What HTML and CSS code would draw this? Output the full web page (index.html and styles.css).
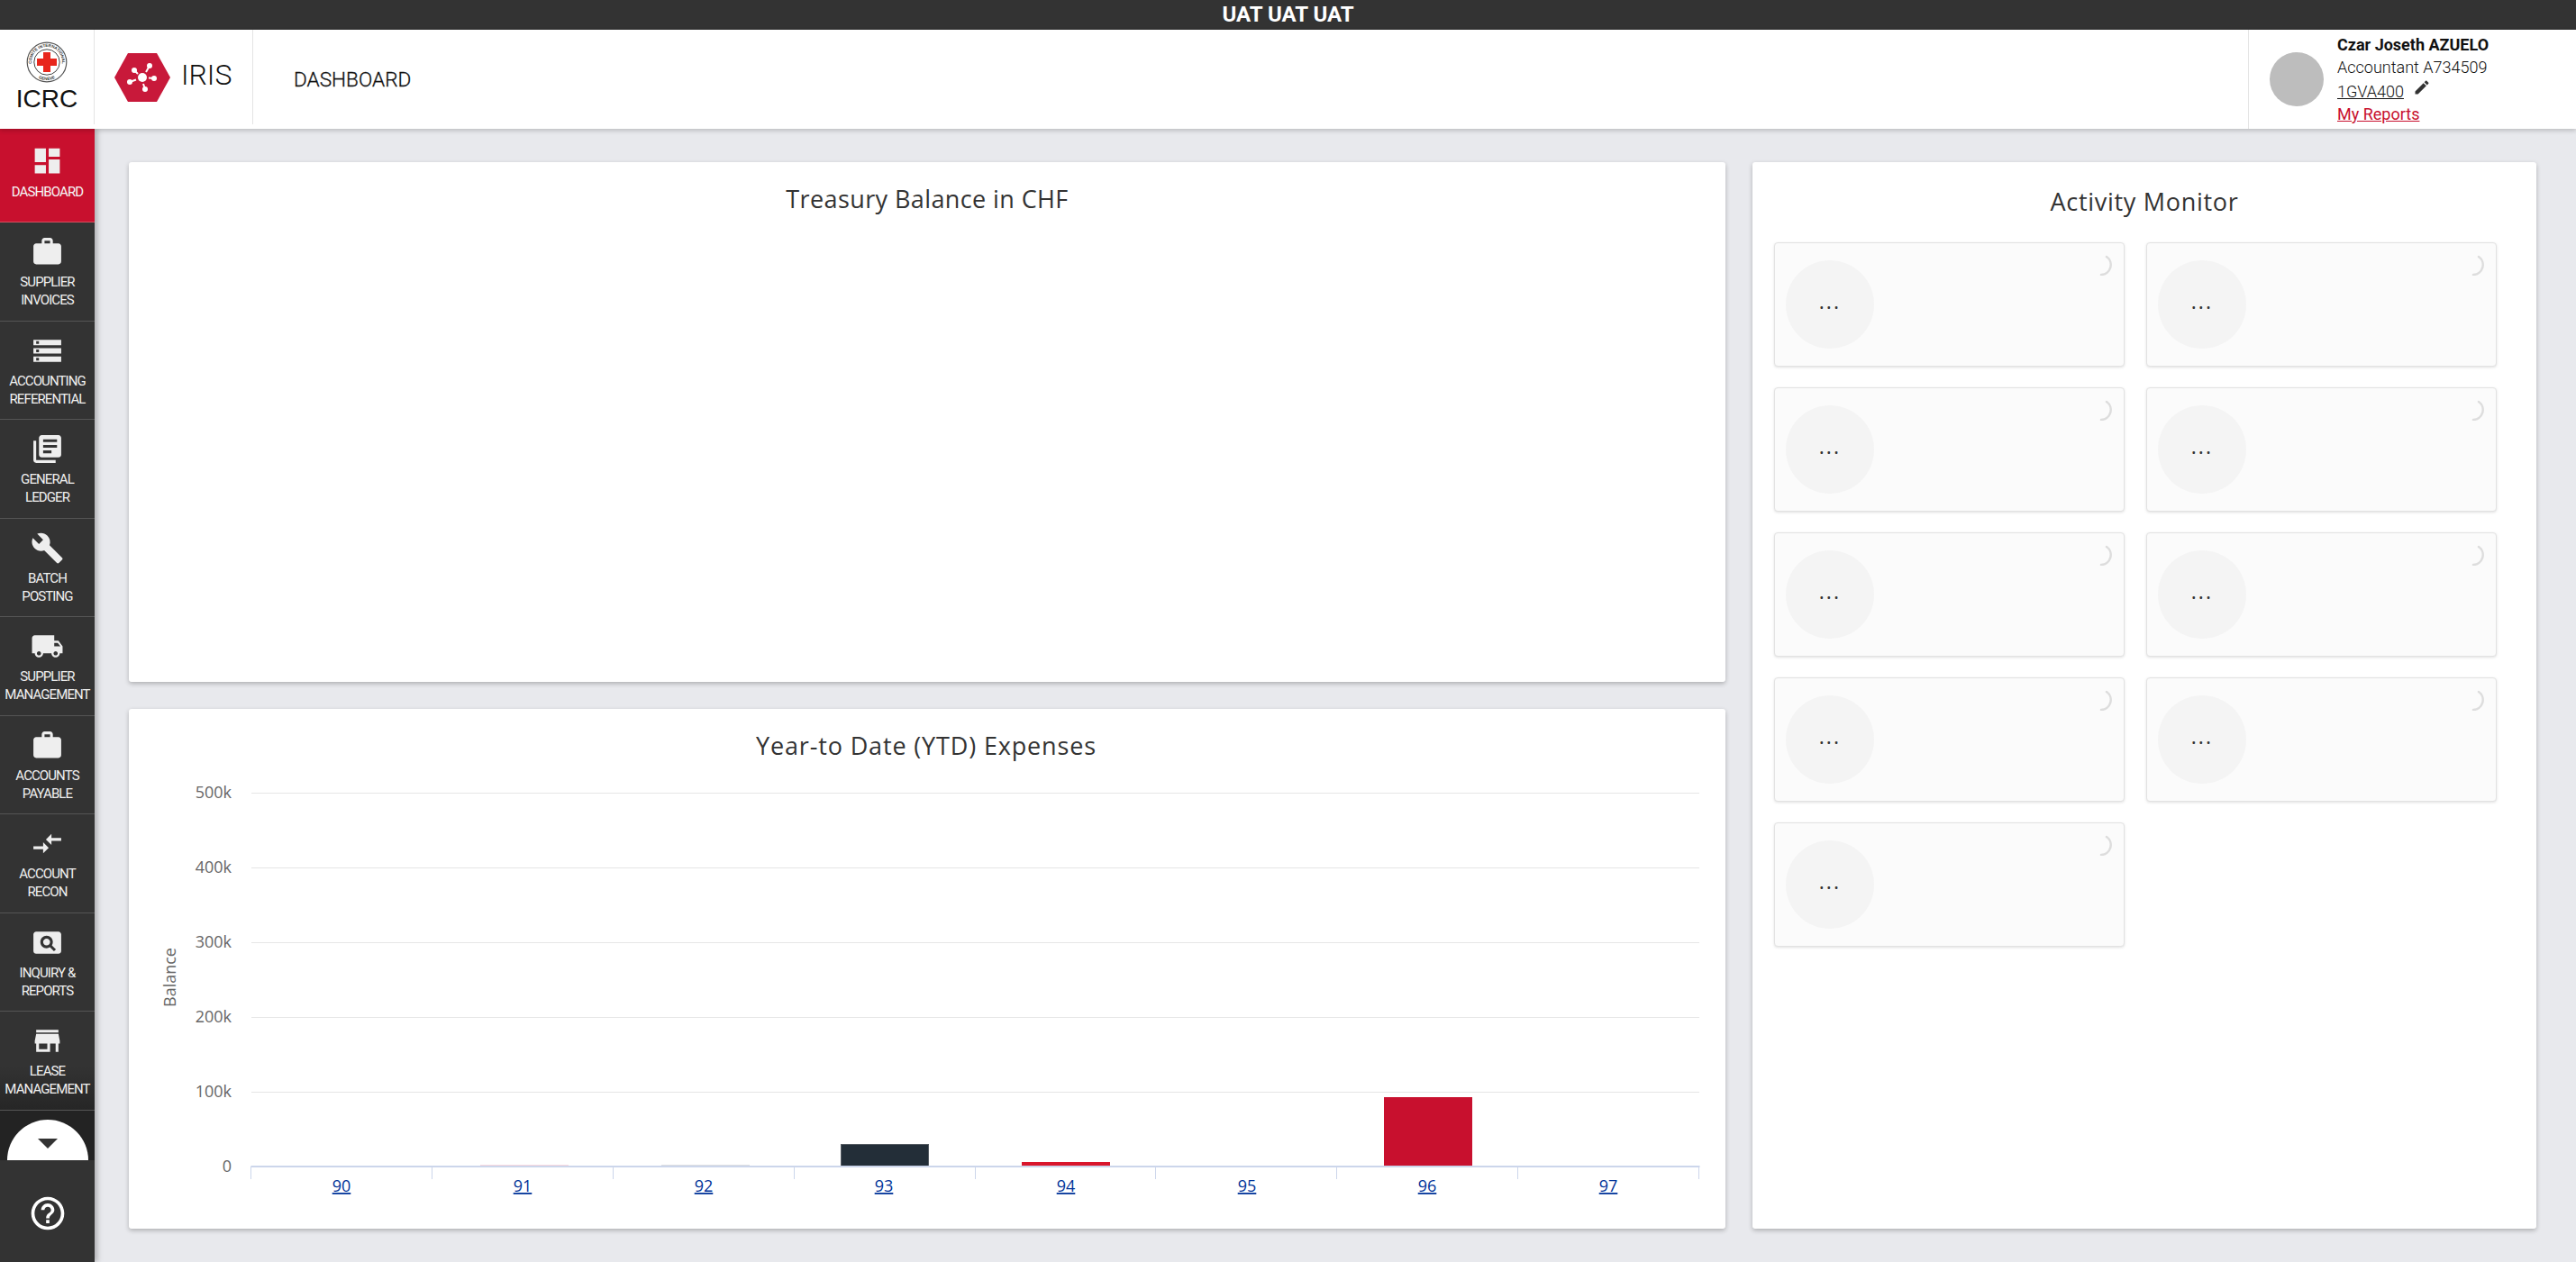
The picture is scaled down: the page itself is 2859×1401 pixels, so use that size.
FILE: index.html
```html
<!DOCTYPE html>
<html lang="en">
  <head>
    <meta charset="UTF-8" />
    <meta name="viewport" content="width=device-width, initial-scale=1.0" />
    <title>IRIS - Dashboard</title>
    <link rel="stylesheet" href="styles.css">
  </head>
  <body>
    <div class="env-bar">UAT UAT UAT</div>

    <header class="top-bar">
      <div class="cell logo-cell">
        <svg class="emblem" width="48" height="48" viewBox="0 0 48 48" xmlns="http://www.w3.org/2000/svg">
          <defs>
            <path id="ring-top" d="M8.5 31A17 17 0 1 1 39.5 31"></path>
            <path id="ring-bottom" d="M10 38.3A20 20 0 0 0 38 38.3"></path>
          </defs>
          <circle cx="24" cy="24" r="21.8" fill="#fff" stroke="#555" stroke-width="1.2"></circle>
          <circle cx="24" cy="24" r="14.2" fill="#fff" stroke="#444" stroke-width="1"></circle>
          <text class="emblem-text"><textPath href="#ring-top" startOffset="50%" text-anchor="middle">COMITE INTERNATIONAL</textPath></text>
          <text class="emblem-text"><textPath href="#ring-bottom" startOffset="50%" text-anchor="middle">GENEVE</textPath></text>
          <rect x="20" y="13" width="8" height="22" fill="#e8261c"></rect>
          <rect x="13" y="20" width="22" height="8" fill="#e8261c"></rect>
        </svg>
        <div class="icrc-name">ICRC</div>
      </div>
      <div class="cell iris-cell">
        <svg width="62" height="54" viewBox="0 0 62 54" xmlns="http://www.w3.org/2000/svg">
          <polygon points="15,0 47,0 62,27 47,54 15,54 0,27" fill="#c8193a"></polygon>
          <g stroke="#fff" stroke-width="2" fill="#fff">
            <line x1="26" y1="23" x2="22" y2="19"></line>
            <line x1="35" y1="21" x2="39" y2="14"></line>
            <line x1="38" y1="27.5" x2="44" y2="28"></line>
            <line x1="24" y1="29.5" x2="17" y2="32"></line>
            <line x1="32" y1="34" x2="34" y2="40"></line>
            <circle cx="31" cy="27" r="5" stroke="none"></circle>
            <circle cx="22" cy="19" r="3" stroke="none"></circle>
            <circle cx="39" cy="14" r="3" stroke="none"></circle>
            <circle cx="44" cy="28" r="3" stroke="none"></circle>
            <circle cx="17" cy="32" r="3" stroke="none"></circle>
            <circle cx="34" cy="40" r="3" stroke="none"></circle>
          </g>
        </svg>
        <span class="iris-name">IRIS</span>
      </div>
      <div class="page-title">DASHBOARD</div>
      <div class="user-cell">
        <div class="avatar"></div>
        <div class="user-info">
          <div class="user-name">Czar Joseth AZUELO</div>
          <div class="user-role">Accountant A734509</div>
          <div class="user-code">
            <a href="#">1GVA400</a>
            <svg width="20" height="20" viewBox="0 0 24 24" xmlns="http://www.w3.org/2000/svg"><path fill="#333" d="M3 17.25V21h3.75L17.81 9.94l-3.75-3.75L3 17.25zM20.71 7.04c.39-.39.39-1.02 0-1.41l-2.34-2.34c-.39-.39-1.02-.39-1.41 0l-1.83 1.83 3.75 3.75 1.83-1.83z"></path></svg>
          </div>
          <a class="reports-link" href="#">My Reports</a>
        </div>
      </div>
    </header>

    <div class="page">
      <nav class="side-nav">
        <a class="nav-item active" href="#">
          <svg viewBox="0 0 24 24" xmlns="http://www.w3.org/2000/svg"><path d="M3 13h8V3H3v10zm0 8h8v-6H3v6zm10 0h8V11h-8v10zm0-18v6h8V3h-8z"></path></svg>
          <span>DASHBOARD</span>
        </a>
        <a class="nav-item" href="#">
          <svg viewBox="0 0 24 24" xmlns="http://www.w3.org/2000/svg"><path d="M20 6h-4V4c0-1.11-.89-2-2-2h-4c-1.11 0-2 .89-2 2v2H4c-1.11 0-1.99.89-1.99 2L2 19c0 1.11.89 2 2 2h16c1.11 0 2-.89 2-2V8c0-1.11-.89-2-2-2zm-6 0h-4V4h4v2z"></path></svg>
          <span>SUPPLIER<br>INVOICES</span>
        </a>
        <a class="nav-item" href="#">
          <svg viewBox="0 0 24 24" xmlns="http://www.w3.org/2000/svg"><path d="M2 20h20v-4H2v4zm2-3h2v2H4v-2zM2 4v4h20V4H2zm4 3H4V5h2v2zm-4 7h20v-4H2v4zm2-3h2v2H4v-2z"></path></svg>
          <span>ACCOUNTING<br>REFERENTIAL</span>
        </a>
        <a class="nav-item" href="#">
          <svg viewBox="0 0 24 24" xmlns="http://www.w3.org/2000/svg"><path d="M4 6H2v14c0 1.1.9 2 2 2h14v-2H4V6zm16-4H8c-1.1 0-2 .9-2 2v12c0 1.1.9 2 2 2h12c1.1 0 2-.9 2-2V4c0-1.1-.9-2-2-2zm-1 9H9V9h10v2zm-4 4H9v-2h6v2zm4-8H9V5h10v2z"></path></svg>
          <span>GENERAL<br>LEDGER</span>
        </a>
        <a class="nav-item" href="#">
          <svg viewBox="0 0 24 24" xmlns="http://www.w3.org/2000/svg"><path d="M22.7 19l-9.1-9.1c.9-2.3.4-5-1.5-6.9-2-2-5-2.4-7.4-1.3L9 6 6 9 1.6 4.7C.4 7.1.9 10.1 2.9 12.1c1.9 1.9 4.6 2.4 6.9 1.5l9.1 9.1c.4.4 1 .4 1.4 0l2.3-2.3c.5-.4.5-1.1.1-1.4z"></path></svg>
          <span>BATCH<br>POSTING</span>
        </a>
        <a class="nav-item" href="#">
          <svg viewBox="0 0 24 24" xmlns="http://www.w3.org/2000/svg"><path d="M20 8h-3V4H3c-1.1 0-2 .9-2 2v11h2c0 1.66 1.34 3 3 3s3-1.34 3-3h6c0 1.66 1.34 3 3 3s3-1.34 3-3h2v-5l-3-4zM6 18.5c-.83 0-1.5-.67-1.5-1.5s.67-1.5 1.5-1.5 1.5.67 1.5 1.5-.67 1.5-1.5 1.5zm13.5-9l1.96 2.5H17V9.5h2.5zm-1.5 9c-.83 0-1.5-.67-1.5-1.5s.67-1.5 1.5-1.5 1.5.67 1.5 1.5-.67 1.5-1.5 1.5z"></path></svg>
          <span>SUPPLIER<br>MANAGEMENT</span>
        </a>
        <a class="nav-item" href="#">
          <svg viewBox="0 0 24 24" xmlns="http://www.w3.org/2000/svg"><path d="M20 6h-4V4c0-1.11-.89-2-2-2h-4c-1.11 0-2 .89-2 2v2H4c-1.11 0-1.99.89-1.99 2L2 19c0 1.11.89 2 2 2h16c1.11 0 2-.89 2-2V8c0-1.11-.89-2-2-2zm-6 0h-4V4h4v2z"></path></svg>
          <span>ACCOUNTS<br>PAYABLE</span>
        </a>
        <a class="nav-item" href="#">
          <svg viewBox="0 0 24 24" xmlns="http://www.w3.org/2000/svg"><path d="M9.01 14H2v2h7.01v3L13 15l-3.99-4v3zm5.98-1v-3H22V8h-7.01V5L11 9l3.99 4z"></path></svg>
          <span>ACCOUNT<br>RECON</span>
        </a>
        <a class="nav-item" href="#">
          <svg viewBox="0 0 24 24" xmlns="http://www.w3.org/2000/svg"><path d="M11.5 9C10.12 9 9 10.12 9 11.5s1.12 2.5 2.5 2.5 2.5-1.12 2.5-2.5S12.88 9 11.5 9zM20 4H4c-1.1 0-2 .9-2 2v12c0 1.1.9 2 2 2h16c1.1 0 2-.9 2-2V6c0-1.1-.9-2-2-2zm-3.21 14.21l-2.91-2.91c-.69.44-1.51.7-2.38.7C9 16 7 14 7 11.5S9 7 11.5 7 16 9 16 11.5c0 .88-.26 1.69-.7 2.39l2.91 2.9-1.42 1.42z"></path></svg>
          <span>INQUIRY &amp;<br>REPORTS</span>
        </a>
        <a class="nav-item nav-item-last" href="#">
          <svg viewBox="0 0 24 24" xmlns="http://www.w3.org/2000/svg"><path d="M20 4H4v2h16V4zm1 10v-2l-1-5H4l-1 5v2h1v6h10v-6h4v6h2v-6h1zm-9 4H6v-4h6v4z"></path></svg>
          <span>LEASE<br>MANAGEMENT</span>
        </a>
        <div class="nav-more">
          <div class="more-btn"><div class="more-arrow"></div></div>
        </div>
        <div class="nav-help">
          <svg viewBox="0 0 24 24" xmlns="http://www.w3.org/2000/svg"><path d="M11 18h2v-2h-2v2zm1-16C6.48 2 2 6.48 2 12s4.48 10 10 10 10-4.48 10-10S17.52 2 12 2zm0 18c-4.41 0-8-3.59-8-8s3.59-8 8-8 8 3.59 8 8-3.59 8-8 8zm0-14c-2.21 0-4 1.79-4 4h2c0-1.1.9-2 2-2s2 .9 2 2c0 2-3 1.75-3 5h2c0-2.25 3-2.5 3-5 0-2.21-1.79-4-4-4z"></path></svg>
        </div>
      </nav>

      <main class="content">
        <div class="left-col">
          <section class="card">
            <h2 class="card-title treasury-title">Treasury Balance in CHF</h2>
          </section>
          <section class="card">
            <svg class="chart" width="1772" height="577" viewBox="0 0 1772 577" xmlns="http://www.w3.org/2000/svg">
              <text class="chart-title" x="885" y="51" text-anchor="middle">Year-to Date (YTD) Expenses</text>

              <g class="grid">
                <line x1="136" x2="1743" y1="93.5" y2="93.5"></line>
                <line x1="136" x2="1743" y1="176.5" y2="176.5"></line>
                <line x1="136" x2="1743" y1="259.5" y2="259.5"></line>
                <line x1="136" x2="1743" y1="342.5" y2="342.5"></line>
                <line x1="136" x2="1743" y1="425.5" y2="425.5"></line>
              </g>

              <g class="y-labels" text-anchor="end">
                <text x="114" y="99">500k</text>
                <text x="114" y="182">400k</text>
                <text x="114" y="265">300k</text>
                <text x="114" y="348">200k</text>
                <text x="114" y="431">100k</text>
                <text x="114" y="514">0</text>
              </g>
              <text class="y-title" transform="translate(52 298) rotate(-90)" text-anchor="middle">Balance</text>

              <rect x="390" y="506" width="98" height="1" fill="#f8d8df"></rect>
              <rect x="591" y="506" width="98" height="1" fill="#dcdee1"></rect>
              <rect class="bar-stroke" x="790.5" y="483.5" width="97" height="24" fill="#232e38"></rect>
              <rect x="991" y="503" width="98" height="5" fill="#d9162c"></rect>
              <rect x="1393" y="431" width="98" height="77" fill="#c8102e"></rect>

              <g class="axis">
                <line x1="135.5" x2="1743.5" y1="508" y2="508"></line>
                <line x1="135.5" x2="135.5" y1="508" y2="522"></line>
                <line x1="336.5" x2="336.5" y1="508" y2="522"></line>
                <line x1="537.5" x2="537.5" y1="508" y2="522"></line>
                <line x1="738.5" x2="738.5" y1="508" y2="522"></line>
                <line x1="939.5" x2="939.5" y1="508" y2="522"></line>
                <line x1="1139.5" x2="1139.5" y1="508" y2="522"></line>
                <line x1="1340.5" x2="1340.5" y1="508" y2="522"></line>
                <line x1="1541.5" x2="1541.5" y1="508" y2="522"></line>
                <line x1="1742.5" x2="1742.5" y1="508" y2="522"></line>
              </g>

              <g class="x-labels" text-anchor="middle">
                <text x="236" y="536">90</text>
                <text x="437" y="536">91</text>
                <text x="638" y="536">92</text>
                <text x="838" y="536">93</text>
                <text x="1040" y="536">94</text>
                <text x="1241" y="536">95</text>
                <text x="1441" y="536">96</text>
                <text x="1642" y="536">97</text>
              </g>
            </svg>
          </section>
        </div>

        <section class="card activity-card">
          <h2 class="card-title activity-title">Activity Monitor</h2>
          <div class="tiles">
            <div class="tile"><div class="tile-circle"><span>...</span></div><svg class="spinner" viewBox="0 0 24 24" xmlns="http://www.w3.org/2000/svg"><path d="M18 3A11 11 0 0 1 12 23"></path></svg></div>
            <div class="tile"><div class="tile-circle"><span>...</span></div><svg class="spinner" viewBox="0 0 24 24" xmlns="http://www.w3.org/2000/svg"><path d="M18 3A11 11 0 0 1 12 23"></path></svg></div>
            <div class="tile"><div class="tile-circle"><span>...</span></div><svg class="spinner" viewBox="0 0 24 24" xmlns="http://www.w3.org/2000/svg"><path d="M18 3A11 11 0 0 1 12 23"></path></svg></div>
            <div class="tile"><div class="tile-circle"><span>...</span></div><svg class="spinner" viewBox="0 0 24 24" xmlns="http://www.w3.org/2000/svg"><path d="M18 3A11 11 0 0 1 12 23"></path></svg></div>
            <div class="tile"><div class="tile-circle"><span>...</span></div><svg class="spinner" viewBox="0 0 24 24" xmlns="http://www.w3.org/2000/svg"><path d="M18 3A11 11 0 0 1 12 23"></path></svg></div>
            <div class="tile"><div class="tile-circle"><span>...</span></div><svg class="spinner" viewBox="0 0 24 24" xmlns="http://www.w3.org/2000/svg"><path d="M18 3A11 11 0 0 1 12 23"></path></svg></div>
            <div class="tile"><div class="tile-circle"><span>...</span></div><svg class="spinner" viewBox="0 0 24 24" xmlns="http://www.w3.org/2000/svg"><path d="M18 3A11 11 0 0 1 12 23"></path></svg></div>
            <div class="tile"><div class="tile-circle"><span>...</span></div><svg class="spinner" viewBox="0 0 24 24" xmlns="http://www.w3.org/2000/svg"><path d="M18 3A11 11 0 0 1 12 23"></path></svg></div>
            <div class="tile"><div class="tile-circle"><span>...</span></div><svg class="spinner" viewBox="0 0 24 24" xmlns="http://www.w3.org/2000/svg"><path d="M18 3A11 11 0 0 1 12 23"></path></svg></div>
          </div>
        </section>
      </main>
    </div>
  </body>
</html>
```
FILE: styles.css
```css
* {
  box-sizing: border-box;
}
html,
body {
  height: 100%;
}
body {
  margin: 0;
  display: flex;
  flex-direction: column;
  overflow: hidden;
  background-color: #e8e9ed;
  color: #111;
  font-family: Roboto, "Liberation Sans", sans-serif;
}
a {
  color: inherit;
}

/* --------------- top */
.env-bar {
  height: 33px;
  flex: none;
  background-color: #333;
  color: #fff;
  font-size: 24px;
  font-weight: 700;
  line-height: 33px;
  text-align: center;
}
.top-bar {
  position: relative;
  z-index: 2;
  height: 110px;
  flex: none;
  display: flex;
  background-color: #fff;
  box-shadow: 0 2px 5px rgba(0, 0, 0, 0.2);
}
.cell {
  height: 105px;
  border-right: 1px solid #e4e4e4;
}
.logo-cell {
  width: 105px;
  display: flex;
  flex-direction: column;
  align-items: center;
  padding-top: 12px;
}
.emblem-text {
  font-family: "Liberation Sans", sans-serif;
  font-size: 4.6px;
  font-weight: 700;
  fill: #333;
}
.icrc-name {
  margin-top: 2px;
  font-family: "Liberation Sans", sans-serif;
  font-size: 28px;
  line-height: 30px;
  color: #111;
}
.iris-cell {
  width: 176px;
  display: flex;
  gap: 12px;
  padding: 26px 0 0 22px;
}
.iris-name {
  font-size: 32px;
  font-weight: 300;
  line-height: 48px;
}
.page-title {
  margin-left: 45px;
  font-size: 22.6px;
  font-weight: 300;
  -webkit-text-stroke: 0.3px #111;
  line-height: 112px;
  color: #111;
}
.user-cell {
  width: 364px;
  margin-left: auto;
  display: flex;
  align-items: center;
  padding-left: 23px;
  border-left: 1px solid #e4e4e4;
}
.avatar {
  width: 60px;
  height: 60px;
  border-radius: 50%;
  background-color: #bdbdbd;
}
.user-info {
  margin-left: 15px;
  font-size: 18px;
  line-height: 25px;
  color: #222;
}
.user-name {
  font-weight: 700;
  color: #111;
}
.user-role {
  font-weight: 300;
  color: #111;
}
.user-code {
  display: flex;
  align-items: flex-start;
  gap: 10px;
  height: 27px;
  font-weight: 300;
  color: #111;
  line-height: 30px;
}
.reports-link {
  color: #c8102e;
}

/* --------------- side nav */
.page {
  flex: 1;
  min-height: 0;
  display: flex;
}
.side-nav {
  position: relative;
  z-index: 1;
  width: 105px;
  flex: none;
  display: flex;
  flex-direction: column;
  background-color: #333;
  box-shadow: 3px 0 6px rgba(0, 0, 0, 0.25);
}
.nav-item {
  height: 109.5px;
  flex: none;
  display: flex;
  flex-direction: column;
  align-items: center;
  padding-top: 14px;
  border-bottom: 1px solid #555;
  color: #f0f0f0;
  font-size: 15px;
  line-height: 20px;
  letter-spacing: -0.9px;
  text-align: center;
  text-decoration: none;
}
.nav-item svg {
  width: 37px;
  height: 37px;
  flex: none;
  margin-bottom: 5px;
  fill: #eee;
}
.nav-item.active {
  height: 104px;
  padding-top: 17px;
  background-color: #c8102e;
  border-bottom-color: #d8505f;
  color: #f6f6f6;
}
.nav-item.active svg {
  margin-bottom: 6px;
}
.nav-item-last {
  background: linear-gradient(#333 55%, #262626);
}
.nav-more {
  height: 55px;
  flex: none;
  display: flex;
  align-items: flex-end;
  justify-content: center;
  background-color: #232323;
}
.more-btn {
  width: 90px;
  height: 45px;
  display: flex;
  justify-content: center;
  padding-top: 21px;
  border-radius: 45px 45px 0 0;
  background-color: #fff;
}
.more-arrow {
  width: 0;
  height: 0;
  border-left: 11px solid transparent;
  border-right: 11px solid transparent;
  border-top: 11px solid #333;
}
.nav-help {
  flex: 1;
  display: flex;
  justify-content: center;
  padding-top: 37px;
}
.nav-help svg {
  width: 44px;
  height: 44px;
  fill: #fff;
}

/* --------------- cards */
.content {
  flex: 1;
  min-width: 0;
  display: flex;
  gap: 30px;
  padding: 37px 44px 37px 38px;
}
.left-col {
  width: 1772px;
  flex: none;
  display: grid;
  grid-template-rows: 577px 577px;
  gap: 30px;
}
.card {
  border-radius: 3px;
  background-color: #fff;
  box-shadow: 0 2px 5px rgba(0, 0, 0, 0.25);
}
.card-title {
  margin: 0;
  color: #333;
  font-family: "Open Sans", sans-serif;
  font-size: 27px;
  font-weight: 400;
  letter-spacing: 0.7px;
  line-height: 36px;
  text-align: center;
}
.treasury-title {
  padding-top: 23px;
  letter-spacing: 0.4px;
}

/* --------------- chart */
.chart {
  display: block;
}
.chart text {
  font-family: "Open Sans", sans-serif;
}
.chart .chart-title {
  font-size: 27px;
  letter-spacing: 0.85px;
  fill: #333;
}
.grid line {
  stroke: #e6e6e6;
  stroke-width: 1;
}
.axis line {
  stroke: #ccd6eb;
  stroke-width: 1;
}
.axis line:first-child {
  stroke-width: 2;
}
.bar-stroke {
  stroke: #555c63;
  stroke-width: 1;
}
.y-labels text {
  font-size: 18px;
  fill: #666;
}
.chart .y-title {
  font-size: 18px;
  fill: #666;
}
.x-labels text {
  font-size: 18px;
  fill: #003399;
  text-decoration: underline;
}

/* --------------- activity monitor */
.activity-card {
  flex: 1;
  min-width: 0;
  padding: 26px 44px 0 24px;
}
.activity-title {
  padding-left: 20px;
}
.tiles {
  display: grid;
  grid-template-columns: 389px 389px;
  grid-auto-rows: 138px;
  column-gap: 24px;
  row-gap: 23px;
  margin-top: 27px;
}
.tile {
  position: relative;
  display: flex;
  align-items: center;
  padding-left: 12px;
  border: 1px solid #e2e2e2;
  border-radius: 4px;
  background-color: #fbfbfb;
  box-shadow: 0 1px 3px rgba(0, 0, 0, 0.12);
}
.tile-circle {
  width: 98px;
  height: 98px;
  display: flex;
  align-items: center;
  justify-content: center;
  border-radius: 50%;
  background-color: #f4f4f4;
  color: #333;
  font-family: "Open Sans", sans-serif;
  font-size: 23px;
  letter-spacing: 2.2px;
}
.tile-circle span {
  margin-bottom: 9px;
}
.spinner {
  position: absolute;
  top: 12px;
  right: 13px;
  width: 24px;
  height: 24px;
  fill: none;
  stroke: #ddd;
  stroke-width: 2.5;
  stroke-linecap: round;
}
```
